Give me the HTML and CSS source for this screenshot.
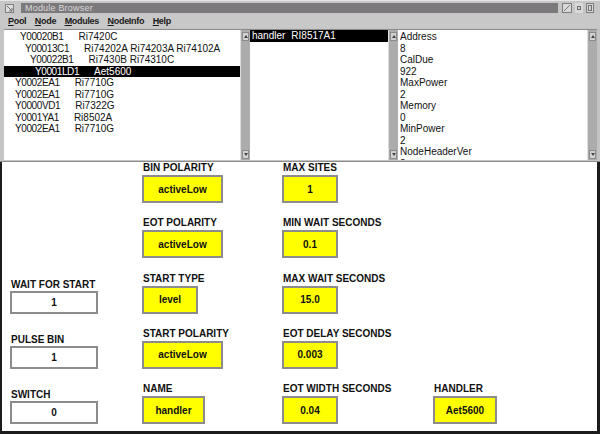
FILE: index.html
```html
<!DOCTYPE html>
<html lang="en">
<head>
    <meta charset="UTF-8">
    <title>Module Browser</title>
    <link rel="stylesheet" href="styles.css">
</head>
<body>
<div class="window">
    <div class="titlebar">
        <span class="win-menu">
            <svg width="9" height="9" viewBox="0 0 9 9"><rect x="0.5" y="0.5" width="8" height="8" fill="#dcdcdc" stroke="#808080"/><path d="M2 2 L7 7 M7 4 L7 7 L4 7" stroke="#707070" fill="none"/></svg>
        </span>
        <div class="title">Module Browser</div>
        <div class="win-buttons">
            <svg width="10" height="10" viewBox="0 0 10 10"><rect x="0.5" y="0.5" width="9" height="9" fill="#d8d8d8" stroke="#7c7c7c"/><path d="M2 8 L8 2" stroke="#7c7c7c"/></svg>
            <svg width="8" height="10" viewBox="0 0 8 10"><rect x="0.5" y="0.5" width="7" height="9" fill="#d8d8d8" stroke="#d8d8d8"/><rect x="2.5" y="3.5" width="3" height="3" fill="none" stroke="#6c6c6c"/></svg>
            <svg width="8" height="10" viewBox="0 0 8 10"><rect x="0.5" y="0.5" width="7" height="9" fill="#d8d8d8" stroke="#7c7c7c"/><rect x="2.5" y="2.5" width="3" height="5" fill="none" stroke="#6c6c6c"/></svg>
        </div>
    </div>

    <div class="menubar">
        <span><u>P</u>ool</span>
        <span><u>N</u>ode</span>
        <span><u>M</u>odules</span>
        <span><u>N</u>odeInfo</span>
        <span><u>H</u>elp</span>
    </div>

    <div class="lists">
        <div class="listbox slots">
            <ul class="list">
                <li class="lv1"><span class="node">Y00020B1</span><span>Ri7420C</span></li>
                <li class="lv2"><span class="node">Y00013C1</span><span>Ri74202A Ri74203A Ri74102A</span></li>
                <li class="lv3"><span class="node">Y00022B1</span><span>Ri7430B Ri74310C</span></li>
                <li class="lv4 selected"><span class="node">Y0001LD1</span><span>Aet5600</span></li>
                <li><span class="node">Y0002EA1</span><span>Ri7710G</span></li>
                <li><span class="node">Y0002EA1</span><span>Ri7710G</span></li>
                <li><span class="node">Y0000VD1</span><span>Ri7322G</span></li>
                <li><span class="node">Y0001YA1</span><span>Ri8502A</span></li>
                <li><span class="node">Y0002EA1</span><span>Ri7710G</span></li>
            </ul>
            <div class="scrollbar"><span class="sb-btn up"></span><span class="sb-btn down"></span></div>
        </div>

        <div class="listbox modules">
            <ul class="list">
                <li class="selected"><span class="kind">handler</span><span>RI8517A1</span></li>
            </ul>
            <div class="scrollbar"><span class="sb-btn up"></span><span class="sb-btn down"></span></div>
        </div>

        <div class="listbox info">
            <ul class="list">
                <li>Address</li>
                <li>8</li>
                <li>CalDue</li>
                <li>922</li>
                <li>MaxPower</li>
                <li>2</li>
                <li>Memory</li>
                <li>0</li>
                <li>MinPower</li>
                <li>2</li>
                <li>NodeHeaderVer</li>
                <li>2</li>
            </ul>
            <div class="scrollbar"><span class="sb-btn up"></span><span class="sb-btn down"></span></div>
        </div>
    </div>

    <div class="panel">
        <div class="col col-a">
            <div class="field small">
                <label>WAIT FOR START</label>
                <div class="value plain">1</div>
            </div>
            <div class="field small">
                <label>PULSE BIN</label>
                <div class="value plain">1</div>
            </div>
            <div class="field small">
                <label>SWITCH</label>
                <div class="value plain">0</div>
            </div>
        </div>

        <div class="col col-b">
            <div class="field">
                <label>BIN POLARITY</label>
                <div class="value w81">activeLow</div>
            </div>
            <div class="field">
                <label>EOT POLARITY</label>
                <div class="value w81">activeLow</div>
            </div>
            <div class="field">
                <label>START TYPE</label>
                <div class="value w56">level</div>
            </div>
            <div class="field">
                <label>START POLARITY</label>
                <div class="value w81">activeLow</div>
            </div>
            <div class="field">
                <label>NAME</label>
                <div class="value w63">handler</div>
            </div>
        </div>

        <div class="col col-c">
            <div class="field">
                <label>MAX SITES</label>
                <div class="value w56">1</div>
            </div>
            <div class="field">
                <label>MIN WAIT SECONDS</label>
                <div class="value w56">0.1</div>
            </div>
            <div class="field">
                <label>MAX WAIT SECONDS</label>
                <div class="value w56">15.0</div>
            </div>
            <div class="field">
                <label>EOT DELAY SECONDS</label>
                <div class="value w56">0.003</div>
            </div>
            <div class="field">
                <label>EOT WIDTH SECONDS</label>
                <div class="value w56">0.04</div>
            </div>
        </div>

        <div class="col col-d">
            <div class="field">
                <label>HANDLER</label>
                <div class="value w64">Aet5600</div>
            </div>
        </div>
    </div>
</div>
</body>
</html>
```

FILE: styles.css
```css
body {
    margin: 0;
    background-color: #c4c4c4;
    font-family: 'Liberation Sans', Arial, Helvetica, sans-serif;
    color: #111;
}
.window {
    width: 600px;
    height: 434px;
    display: flex;
    flex-direction: column;
    background-color: #c4c4c4;
    overflow: hidden;
}

/* title bar */
.titlebar {
    height: 14px;
    box-sizing: border-box;
    display: flex;
    padding: 2px 0 1px 0;
    border-top: 1px solid #e6e6e6;
    background-color: #c6c6c6;
}
.win-menu {
    width: 21px;
    display: flex;
    align-items: center;
    padding-left: 5px;
    box-sizing: border-box;
}
.title {
    flex: 1;
    background-color: #7c797c;
    color: #d8d8d8;
    font-size: 9px;
    line-height: 11px;
    padding-left: 4px;
    letter-spacing: 0.2px;
}
.win-buttons {
    display: flex;
    align-items: center;
    gap: 3px;
    padding: 0 6px 0 4px;
}
.win-buttons svg {
    display: block;
}

/* menu bar */
.menubar {
    height: 14px;
    display: flex;
    gap: 8.5px;
    padding-left: 8px;
    font-size: 9px;
    font-weight: bold;
    line-height: 14px;
    letter-spacing: -0.3px;
    color: #1a1a1a;
    background-color: #c8c8c8;
}

/* the three list boxes */
.lists {
    height: 134px;
    box-sizing: border-box;
    display: flex;
    padding: 1px 3px 1px 4px;
    border-bottom: 1px solid #8c8c8c;
}
.listbox {
    display: flex;
    border-top: 1px solid #8c8c8c;
}
.listbox.slots { width: 246px; }
.listbox.modules { width: 148px; }
.listbox.info { flex: 1; }

.list {
    flex: 1;
    margin: 0;
    padding: 1px 0 0 0;
    list-style: none;
    background-color: #fff;
    font-size: 10px;
    line-height: 11.5px;
    white-space: nowrap;
    overflow: hidden;
}
.list li {
    padding-left: 11px;
}
.list li.lv1 { padding-left: 16px; }
.list li.lv2 { padding-left: 21px; }
.list li.lv3 { padding-left: 26px; }
.list li.lv4 { padding-left: 31px; }
.list li.selected {
    background-color: #000;
    color: #fff;
}
.list .node {
    margin-right: 15px;
    letter-spacing: -0.4px;
}
.modules .list { padding-top: 0; }
.modules .list li { padding-left: 2px; }
.modules .kind { margin-right: 6px; }
.info .list li { padding-left: 2px; }

.scrollbar {
    width: 10px;
    box-sizing: border-box;
    display: flex;
    flex-direction: column;
    justify-content: space-between;
    padding: 2px 1px 1px 1px;
    background-color: #acacac;
    border-left: 1px solid #dedede;
}
.sb-btn {
    height: 9px;
    box-sizing: border-box;
    display: flex;
    align-items: center;
    justify-content: center;
    background-color: #d2d2d2;
    border: 1px solid #8a8a8a;
}
.sb-btn::after {
    content: "";
    border-left: 2px solid transparent;
    border-right: 2px solid transparent;
}
.sb-btn.up::after { border-bottom: 3px solid #444; }
.sb-btn.down::after { border-top: 3px solid #444; }

/* settings panel */
.panel {
    flex: 1;
    display: flex;
    padding: 0 0 7px 8px;
    background-color: #fff;
    border-left: 2px solid #1c1c1c;
    border-right: 3px solid #1c1c1c;
    border-bottom: 3px solid #1c1c1c;
}
.col {
    display: flex;
    flex-direction: column;
    justify-content: flex-end;
    gap: 14.25px;
}
.col-a { width: 132px; }
.col-b { width: 140px; }
.col-c { width: 151px; }
.col-d { flex: 1; }

.field {
    height: 41px;
    display: flex;
    flex-direction: column;
    justify-content: flex-end;
}
.field label {
    font-size: 10px;
    font-weight: bold;
    line-height: 12px;
    margin-bottom: 1px;
    padding-left: 1px;
    white-space: nowrap;
}
.field.small label {
    margin-bottom: 0;
}
.value {
    height: 28px;
    box-sizing: border-box;
    display: flex;
    align-items: center;
    justify-content: center;
    background-color: #ffff00;
    border: 2px solid #8c8c8c;
    font-size: 10px;
    font-weight: bold;
}
.value.plain {
    width: 88px;
    height: 23px;
    background-color: #fff;
}
.w56 { width: 56px; }
.w63 { width: 63px; }
.w64 { width: 64px; }
.w81 { width: 81px; }
```
